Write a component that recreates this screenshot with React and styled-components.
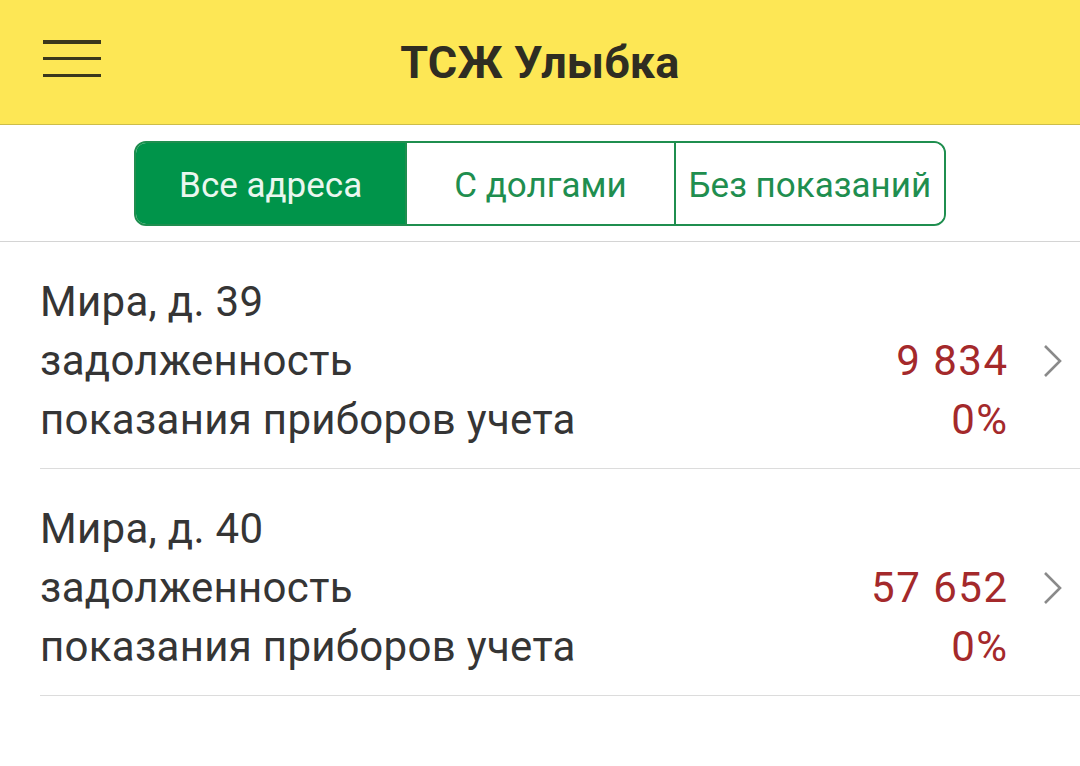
import React from "react";
import styled, { createGlobalStyle } from "styled-components";

const GlobalStyle = createGlobalStyle`
  html, body {
    margin: 0;
    padding: 0;
    background: #ffffff;
  }
  body {
    font-family: Roboto, "Noto Sans", sans-serif;
    color: #333333;
  }
`

const Page = styled.div`
  width: 1080px;
  min-height: 766px;
  background: #ffffff;
`

const Header = styled.header`
  position: relative;
  height: 124px;
  background: #fde755;
  border-bottom: 1px solid #cdbd4a;
  display: flex;
  align-items: center;
  justify-content: center;
`

const MenuButton = styled.button`
  position: absolute;
  left: 43px;
  top: 40px;
  width: 58px;
  height: 37px;
  padding: 0;
  border: 0;
  background: transparent;
  display: flex;
  flex-direction: column;
  justify-content: space-between;
`

const MenuLine = styled.span`
  display: block;
  height: 3.5px;
  background: #3b381c;
`

const Title = styled.h1`
  margin: 0;
  font-family: Roboto, "Noto Sans", sans-serif;
  font-weight: 700;
  font-size: 45px;
  color: #2f2d22;
  letter-spacing: 0.2px;
`

const FilterBar = styled.div`
  display: flex;
  justify-content: center;
  padding: 16px 0 15px;
  border-bottom: 1px solid #d4d4d4;
`

const Segments = styled.div`
  display: flex;
  width: 812px;
  height: 85px;
  box-sizing: border-box;
  border: 2.5px solid #1f8e4f;
  border-radius: 12px;
  overflow: hidden;
`

const Segment = styled.div`
  flex: ${(p) => p.$grow};
  display: flex;
  align-items: center;
  justify-content: center;
  padding-top: 3px;
  font-size: 35px;
  background: ${(p) => (p.$active ? "#00944a" : "#ffffff")};
  color: ${(p) => (p.$active ? "#eaf7ef" : "#1f8e4f")};
  & + & {
    border-left: 2.5px solid #1f8e4f;
  }
`

const List = styled.div`
  display: flex;
  flex-direction: column;
`

const Row = styled.div`
  display: grid;
  grid-template-columns: 1fr auto 73px;
  margin-left: 40px;
  padding: 30px 0 19px;
  border-bottom: 1px solid #dcdcdc;
  font-size: 42px;
  line-height: 59px;
  letter-spacing: 0.3px;
`

const Label = styled.div`
  color: #353535;
  grid-column: 1;
`

const Value = styled.div`
  grid-column: 2;
  text-align: right;
  color: #a4292b;
  letter-spacing: 1.5px;
  margin-right: -1.5px;
`

const Chevron = styled.svg`
  grid-column: 3;
  grid-row: 2;
  align-self: center;
  margin-left: 36px;
  width: 20px;
  height: 34px;
`

const addresses = [
  { name: "Мира, д. 39", debt: "9 834", meters: "0%" },
  { name: "Мира, д. 40", debt: "57 652", meters: "0%" },
];

const AddressRow = ({ address }) => (
  <Row>
    <Label>{address.name}</Label>
    <Value />
    <Label>задолженность</Label>
    <Value>{address.debt}</Value>
    <Chevron viewBox="0 0 20 34">
      <polyline points="2,2 17,17 2,32" fill="none" stroke="#8a8a8a" strokeWidth="2.6" />
    </Chevron>
    <Label>показания приборов учета</Label>
    <Value>{address.meters}</Value>
  </Row>
);

const App = () => {
  return (
    <Page>
      <GlobalStyle />
      <Header>
        <MenuButton aria-label="menu">
          <MenuLine />
          <MenuLine />
          <MenuLine />
        </MenuButton>
        <Title>ТСЖ Улыбка</Title>
      </Header>
      <FilterBar>
        <Segments>
          <Segment $active $grow={272}>Все адреса</Segment>
          <Segment $grow={269}>С долгами</Segment>
          <Segment $grow={271}>Без показаний</Segment>
        </Segments>
      </FilterBar>
      <List>
        {addresses.map((a) => (
          <AddressRow key={a.name} address={a} />
        ))}
      </List>
    </Page>
  );
};

export default App;
